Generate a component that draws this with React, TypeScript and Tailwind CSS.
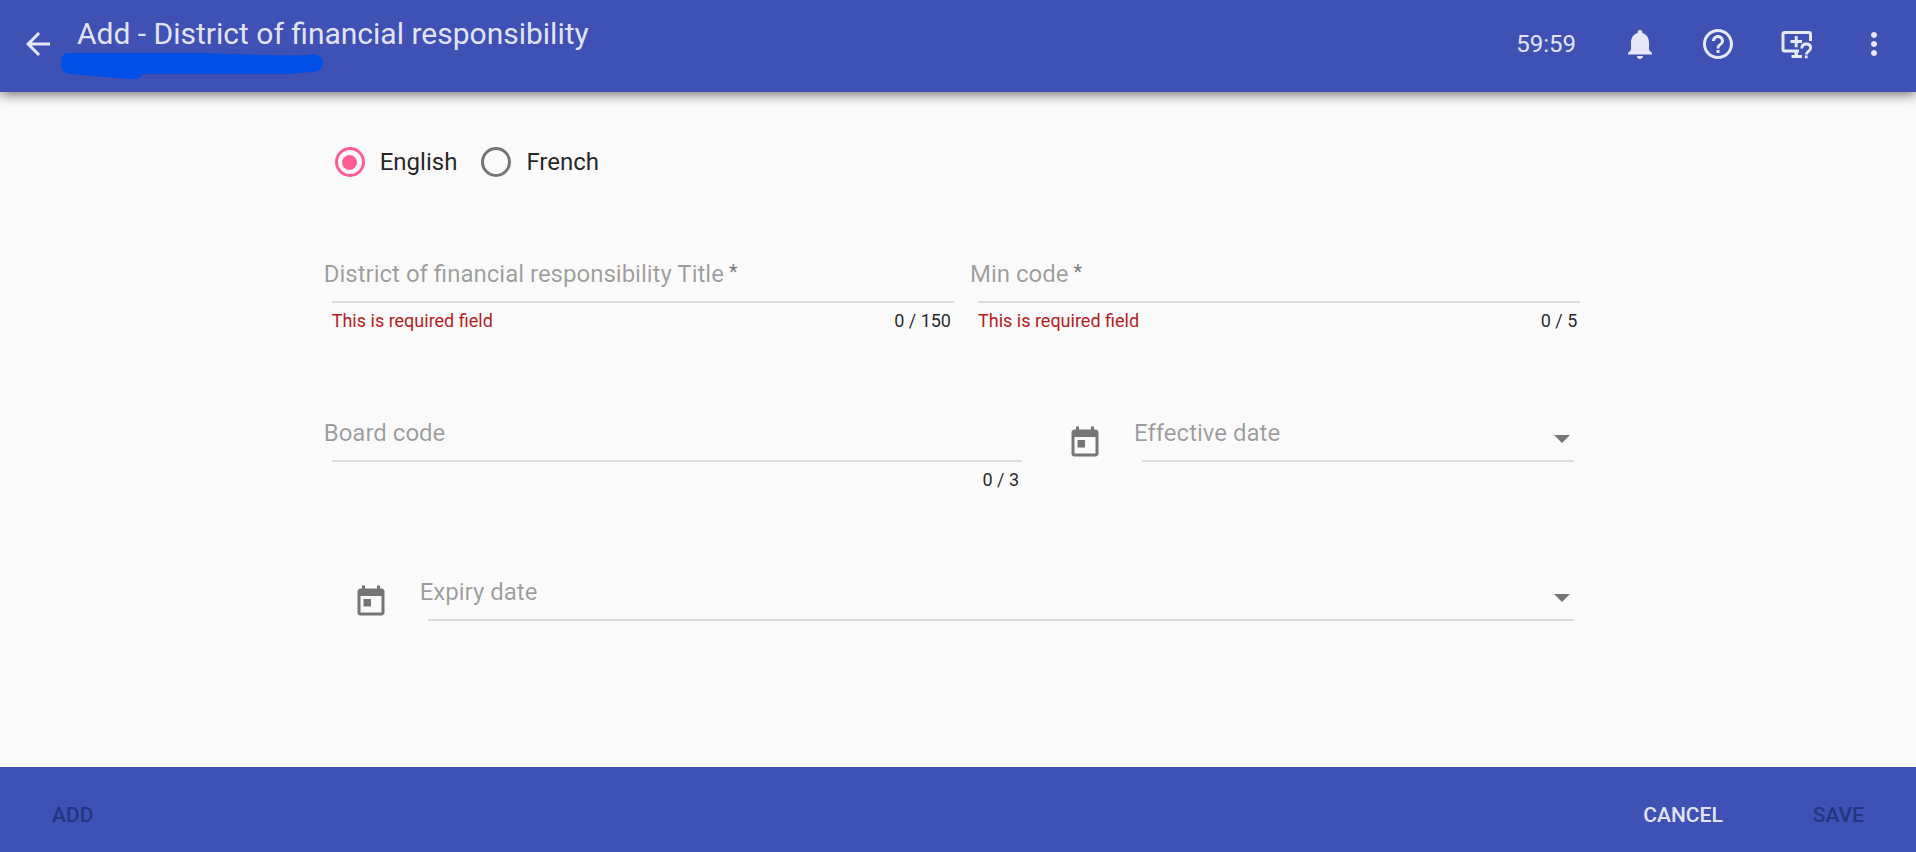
import { useId, useState } from "react";
import type { ReactNode } from "react";
import {
  MdArrowBack,
  MdHelpOutline,
  MdMoreVert,
  MdNotifications,
  MdToday,
} from "react-icons/md";

function SupportIcon() {
  return (
    <svg viewBox="0 0 36 36" className="size-9" fill="currentColor" aria-hidden="true">
      <path d="M6.500 5h24.500a3 3 0 0 1 3 3v7h-3V8H6.500v15.500H21v3h-1V29h4v3H13.500v-3h3v-2.500h-10a3 3 0 0 1-3-3V8a3 3 0 0 1 3-3z" />
      <path d="M16.700 10h3v4h4.300v3h-4.300v4.300h-3v-4.300h-4.200v-3h4.200z" />
      <path
        d="M23.800 22.500c0-2.900 1.700-4.500 4.400-4.500s4.500 1.600 4.500 4c0 3.400-4.500 3.200-4.500 6.600"
        fill="none"
        stroke="currentColor"
        strokeWidth="2.800"
      />
      <path d="M26.800 29.500h2.800v2.800h-2.800z" />
    </svg>
  );
}

function IconButton({ label, children }: { label: string; children: ReactNode }) {
  return (
    <button type="button" aria-label={label} className="flex size-9 items-center justify-center">
      {children}
    </button>
  );
}

function Radio({
  label,
  checked,
  onSelect,
}: {
  label: string;
  checked: boolean;
  onSelect: () => void;
}) {
  return (
    <label className="flex items-center gap-[15px] text-2xl">
      <input
        type="radio"
        name="language"
        checked={checked}
        onChange={onSelect}
        className="grid size-[30px] appearance-none place-items-center rounded-full border-3 border-[#757575] before:size-[15px] before:rounded-full checked:border-[#ff5c93] checked:before:bg-[#ff5c93]"
      />
      {label}
    </label>
  );
}

function Line({
  label,
  required = false,
  picker = false,
}: {
  label: string;
  required?: boolean;
  picker?: boolean;
}) {
  const id = useId();
  const [value, setValue] = useState("");
  return (
    <div className="grid h-[57px] w-full grid-cols-[1fr_auto] border-b-2 border-black/12">
      <input
        id={id}
        value={value}
        onChange={(e) => setValue(e.target.value)}
        required={required}
        className="col-start-1 row-start-1 w-full bg-transparent text-2xl outline-none"
      />
      {value === "" && (
        <label
          htmlFor={id}
          className="pointer-events-none col-start-1 row-start-1 -ml-2 flex items-start gap-[5px] self-center text-2xl leading-8 text-black/38"
        >
          {label}
          {required && <span className="text-xl leading-7 text-black/54">*</span>}
        </label>
      )}
      {picker && (
        <button
          type="button"
          aria-label={`Open ${label.toLowerCase()} calendar`}
          className="col-start-2 row-start-1 flex items-center px-1 pt-3"
        >
          <svg viewBox="0 0 16 8" className="h-2 w-4 text-[#757575]" aria-hidden="true">
            <path d="M0 0h16L8 8z" fill="currentColor" />
          </svg>
        </button>
      )}
    </div>
  );
}

function TextField({
  label,
  max,
  required = false,
}: {
  label: string;
  max: number;
  required?: boolean;
}) {
  return (
    <div>
      <Line label={label} required={required} />
      <div className="flex justify-between pt-1 pr-[3px] text-lg leading-7">
        <span className="text-[#b71c1c]">{required ? "This is required field" : ""}</span>
        <span>0 / {max}</span>
      </div>
    </div>
  );
}

function DateField({ label }: { label: string }) {
  return (
    <div className="flex items-start pr-1.5 pl-[21px]">
      <MdToday className="mt-5 mr-[39px] size-9 shrink-0 text-[#757575]" />
      <Line label={label} picker />
    </div>
  );
}

export default function App() {
  const [language, setLanguage] = useState("English");
  return (
    <div className="flex min-h-screen flex-col bg-[#fafafa] font-[Roboto,sans-serif] text-black/87">
      <header className="relative flex h-[92px] items-center justify-between bg-[#3f51b5] pr-6 pb-1 pl-5 text-white/87 shadow-[0_2px_12px_rgba(0,0,0,0.6)]">
        <div className="flex items-center gap-[21px]">
          <IconButton label="Back">
            <MdArrowBack className="size-9" />
          </IconButton>
          <h1 className="pb-5 text-3xl leading-9">Add - District of financial responsibility</h1>
        </div>
        <svg
          viewBox="0 0 264 27"
          className="absolute top-[53px] left-[60px] h-[27px] w-[264px]"
          fill="#004fe6"
          aria-hidden="true"
        >
          <path d="M9 0H140L200 2L238 2.500L253 1.500C260 2 263 5 263 10C263 16 260 18 253 19C240 20 230 21 215 21H83C80 25 78 26 72 26C50 25 28 22 9 21C3 20 1 15 1 10C1 4 3 0 9 0Z" />
        </svg>
        <div className="flex items-center gap-[42px]">
          <time className="pr-1 text-2xl">59:59</time>
          <IconButton label="Notifications">
            <MdNotifications className="size-9" />
          </IconButton>
          <IconButton label="Help">
            <MdHelpOutline className="size-9" />
          </IconButton>
          <IconButton label="Request support">
            <SupportIcon />
          </IconButton>
          <IconButton label="More options">
            <MdMoreVert className="size-9" />
          </IconButton>
        </div>
      </header>

      <main className="mx-auto w-[66%] flex-1 pr-2.5 pl-1.5">
        <form id="district" className="flex flex-col" onSubmit={(e) => e.preventDefault()}>
          <fieldset className="flex gap-6 pt-[54px] pb-[68px] pl-[3px]">
            <Radio
              label="English"
              checked={language === "English"}
              onSelect={() => setLanguage("English")}
            />
            <Radio
              label="French"
              checked={language === "French"}
              onSelect={() => setLanguage("French")}
            />
          </fieldset>
          <div className="flex flex-col gap-[70px]">
            <div className="grid grid-cols-[622fr_602fr] gap-6">
              <TextField label="District of financial responsibility Title" max={150} required />
              <TextField label="Min code" max={5} required />
            </div>
            <div className="grid grid-cols-[690fr_534fr] gap-6">
              <TextField label="Board code" max={3} />
              <DateField label="Effective date" />
            </div>
            <DateField label="Expiry date" />
          </div>
        </form>
      </main>

      <footer className="flex h-[85px] items-center justify-between bg-[#3f51b5] px-[52px] pt-3 text-[21px] font-medium">
        <button type="button" disabled className="text-[#25347f]">
          ADD
        </button>
        <div className="flex gap-[90px]">
          <button type="button" className="text-white/87">
            CANCEL
          </button>
          <button type="submit" form="district" disabled className="text-[#25347f]">
            SAVE
          </button>
        </div>
      </footer>
    </div>
  );
}
